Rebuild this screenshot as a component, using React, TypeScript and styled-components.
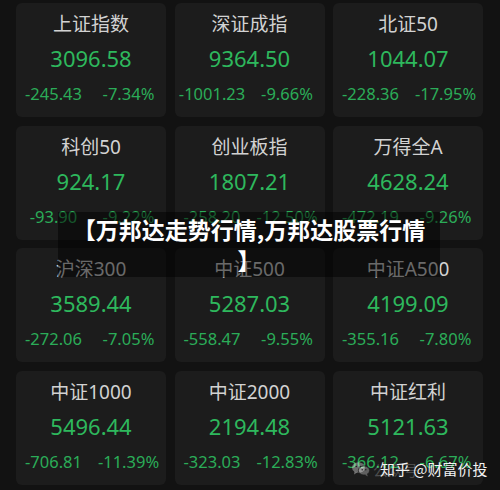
import React, { FC } from 'react';
import styled, { createGlobalStyle } from 'styled-components';

const GlobalStyle = createGlobalStyle`
    html, body {
        margin: 0;
        padding: 0;
        background: #121212;
    }
    body {
        font-family: "Noto Sans", "Noto Sans CJK SC", sans-serif;
    }
`;

const Page = styled.div`
    position: relative;
    width: 500px;
    height: 490px;
    overflow: hidden;
    background: #121212;
`;

const Grid = styled.div`
    display: grid;
    grid-template-columns: repeat(3, 1fr);
    grid-auto-rows: 114px;
    column-gap: 8.5px;
    row-gap: 8.5px;
    padding: 3px 17px 0 16px;
`;

const Card = styled.div`
    display: flex;
    flex-direction: column;
    align-items: center;
    background: #1c1c1c;
    border-radius: 6px;
    padding-top: 8px;
`;

const Title = styled.div`
    font-family: "Noto Sans", "Noto Sans CJK SC", sans-serif;
    font-size: 19px;
    line-height: 26px;
    color: #d2d2d2;
`;

const Value = styled.div`
    margin-top: 6px;
    font-size: 22px;
    line-height: 30px;
    color: #2eb85d;
`;

const Changes = styled.div`
    display: grid;
    grid-template-columns: 1fr 1fr;
    width: 100%;
    margin-top: 11px;
`;

const Change = styled.span`
    text-align: center;
    font-size: 16.5px;
    line-height: 20px;
    color: #2bac58;
`;

const Banner = styled.div`
    position: absolute;
    left: 58px;
    top: 212px;
    width: 382px;
    height: 65px;
    padding-top: 2px;
    box-sizing: border-box;
    background: rgba(0, 0, 0, 0.5);
    color: #ffffff;
    font-family: "Noto Sans CJK SC", sans-serif;
    font-weight: 700;
    font-size: 23px;
    line-height: 31px;
    text-align: center;
    white-space: nowrap;
`;

const Watermark = styled.div`
    position: absolute;
    left: 351px;
    top: 458px;
    display: flex;
    align-items: center;
    gap: 2px;
    height: 22px;
`;

const FaintText = styled.span`
    font-family: "Noto Sans CJK SC", sans-serif;
    font-size: 15px;
    color: rgba(255, 255, 255, 0.22);
`;

const Credit = styled.span`
    position: absolute;
    left: 380px;
    top: 458px;
    line-height: 22px;
    font-family: "Noto Sans CJK SC", sans-serif;
    font-size: 15px;
    color: #f2f2f2;
    white-space: nowrap;
`;

interface Index {
    name: string;
    value: string;
    diff: string;
    pct: string;
}

const indices: Index[] = [
    { name: '上证指数', value: '3096.58', diff: '-245.43', pct: '-7.34%' },
    { name: '深证成指', value: '9364.50', diff: '-1001.23', pct: '-9.66%' },
    { name: '北证50', value: '1044.07', diff: '-228.36', pct: '-17.95%' },
    { name: '科创50', value: '924.17', diff: '-93.90', pct: '-9.22%' },
    { name: '创业板指', value: '1807.21', diff: '-258.20', pct: '-12.50%' },
    { name: '万得全A', value: '4628.24', diff: '-472.19', pct: '-9.26%' },
    { name: '沪深300', value: '3589.44', diff: '-272.06', pct: '-7.05%' },
    { name: '中证500', value: '5287.03', diff: '-558.47', pct: '-9.55%' },
    { name: '中证A500', value: '4199.09', diff: '-355.16', pct: '-7.80%' },
    { name: '中证1000', value: '5496.44', diff: '-706.81', pct: '-11.39%' },
    { name: '中证2000', value: '2194.48', diff: '-323.03', pct: '-12.83%' },
    { name: '中证红利', value: '5121.63', diff: '-366.12', pct: '-6.67%' },
];

const IndexCard: FC<{ item: Index }> = ({ item }) => (
    <Card>
        <Title>{item.name}</Title>
        <Value>{item.value}</Value>
        <Changes>
            <Change>{item.diff}</Change>
            <Change>{item.pct}</Change>
        </Changes>
    </Card>
);

const WeChatIcon: FC = () => (
    <svg width="20" height="16" viewBox="0 0 20 16" fill="none">
        <ellipse cx="7.5" cy="6.5" rx="6.5" ry="5.3" fill="rgba(255,255,255,0.35)" />
        <path d="M3.5 10.5 L3 13.5 L6.2 11.6 Z" fill="rgba(255,255,255,0.35)" />
        <ellipse cx="13" cy="9.5" rx="5.6" ry="4.6" fill="rgba(255,255,255,0.3)" stroke="#1c1c1c" strokeWidth="0.8" />
        <path d="M16 13 L16.8 15.5 L14 13.8 Z" fill="rgba(255,255,255,0.3)" />
        <circle cx="5.3" cy="5.5" r="0.8" fill="#1c1c1c" />
        <circle cx="9.3" cy="5.5" r="0.8" fill="#1c1c1c" />
        <circle cx="11.2" cy="8.8" r="0.7" fill="#1c1c1c" />
        <circle cx="14.8" cy="8.8" r="0.7" fill="#1c1c1c" />
    </svg>
);

export default function App() {
    return (
        <Page>
            <GlobalStyle />
            <Grid>
                {indices.map((item) => (
                    <IndexCard key={item.name} item={item} />
                ))}
            </Grid>

            <Banner>
                【万邦达走势行情,万邦达股票行情
                <br />
                】
            </Banner>

            <Watermark>
                <WeChatIcon />
                <FaintText>公众号</FaintText>
            </Watermark>
            <Credit>知乎 @财富价投</Credit>
        </Page>
    );
}
